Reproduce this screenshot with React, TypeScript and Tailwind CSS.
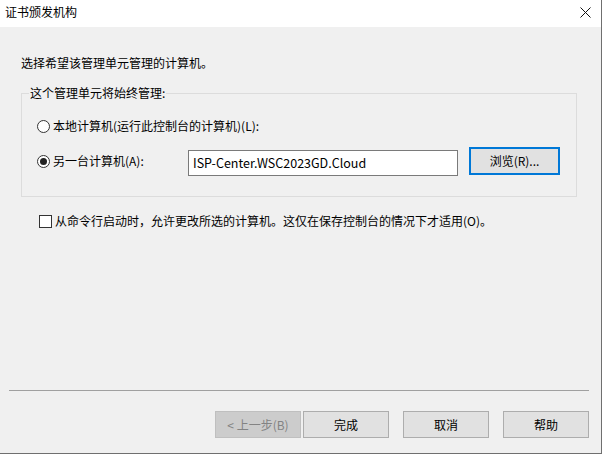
import React from "react";

const font = { fontFamily: '"Noto Sans CJK SC", "Noto Sans", sans-serif' };

function Btn({ children, disabled }: { children: React.ReactNode; disabled?: boolean }) {
  return (
    <div
      className={
        "w-[86px] h-[27px] flex items-center justify-center text-[12px] leading-[16px] border " +
        (disabled ? "bg-[#cccccc] border-[#bfbfbf] text-[#838383]" : "bg-[#e1e1e1] border-[#adadad] text-black")
      }
    >
      {children}
    </div>
  );
}

export default function App() {
  return (
    <div
      className="w-[602px] h-[454px] flex flex-col bg-[#f0f0f0] border-r border-b border-[#6f6f6f] text-black text-[12px] leading-[16px] overflow-hidden"
      style={font}
    >
      {/* title bar */}
      <div className="h-[27px] bg-white flex items-center justify-between pl-[5px] pr-[10px] shrink-0">
        <span className="text-[12px] leading-[16px] -mt-[3px]">证书颁发机构</span>
        <svg width="11" height="11" viewBox="0 0 11 11" className="-mt-[3px]">
          <path d="M0.5 0.5 L10.5 10.5 M10.5 0.5 L0.5 10.5" stroke="#111" strokeWidth="1" />
        </svg>
      </div>

      {/* body */}
      <div className="flex flex-col flex-1">
        <div className="pl-[21px] mt-[28px]">选择希望该管理单元管理的计算机。</div>

        <fieldset className="ml-[21px] w-[556px] mt-[14px] border border-[#dcdcdc] pl-[15px] pb-[20px]">
          <legend className="-ml-[8px] px-[1px] leading-[16px]">这个管理单元将始终管理:</legend>
          <div className="flex items-center mt-[17px] h-[16px]">
            <span className="w-[13px] h-[13px] rounded-full border border-[#333] bg-white mr-[3px]" />
            <span>本地计算机(运行此控制台的计算机)(L):</span>
          </div>
          <div className="flex items-start mt-[13px]">
            <div className="w-[151px] flex items-center mt-[6px] h-[16px]">
              <span className="w-[13px] h-[13px] rounded-full border border-[#333] bg-white mr-[3px] flex items-center justify-center">
                <span className="w-[7px] h-[7px] rounded-full bg-[#222]" />
              </span>
              <span>另一台计算机(A):</span>
            </div>
            <div className="w-[270px] h-[26px] mt-[3px] border border-[#7a7a7a] bg-white flex items-center pl-[4px] text-[12.5px]">
              ISP-Center.WSC2023GD.Cloud
            </div>
            <div className="ml-[11px] w-[91px] h-[28px] border-2 border-[#0078d7] bg-[#e1e1e1] flex items-center justify-center">
              浏览(R)...
            </div>
          </div>
        </fieldset>

        <div className="flex items-center pl-[39px] mt-[16px]">
          <span className="w-[13px] h-[13px] border border-[#333] bg-white mr-[3px]" />
          <span>从命令行启动时，允许更改所选的计算机。这仅在保存控制台的情况下才适用(O)。</span>
        </div>

        <div className="mt-auto">
          <div className="ml-[9px] mr-[12px] h-px bg-[#a0a0a0]" />
          <div className="flex justify-end pr-[12px] pt-[20px] pb-[15px]">
            <Btn disabled>&lt; 上一步(B)</Btn>
            <div className="ml-[2px]">
              <Btn>完成</Btn>
            </div>
            <div className="ml-[14px]">
              <Btn>取消</Btn>
            </div>
            <div className="ml-[14px]">
              <Btn>帮助</Btn>
            </div>
          </div>
        </div>
      </div>
    </div>
  );
}
